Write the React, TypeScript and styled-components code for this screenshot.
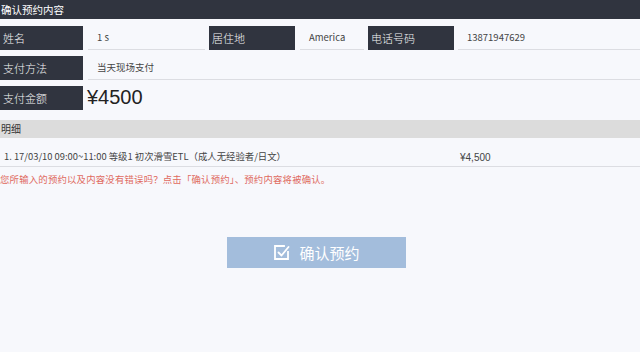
import React, { FC } from 'react';
import styled, { createGlobalStyle } from 'styled-components';

const GlobalStyle = createGlobalStyle`
  html, body {
    margin: 0;
    padding: 0;
    background: #f7f8fc;
  }
  body {
    font-family: "Noto Sans CJK SC", "Noto Sans", sans-serif;
    color: #333;
  }
`;

const Page = styled.div`
  width: 640px;
  height: 352px;
  overflow: hidden;
  background: #f7f8fc;
`;

const TitleBar = styled.div`
  height: 19px;
  background: #30343f;
  color: #fff;
  font-size: 10.5px;
  line-height: 19px;
  padding-left: 1px;
`;

const Form = styled.div`
  display: flex;
  flex-direction: column;
  gap: 6px;
  padding-top: 7px;
`;

const Row = styled.div`
  display: flex;
  height: 24px;
`;

const Label = styled.div<{ $w: number; $gap?: number }>`
  width: ${(p) => p.$w}px;
  margin-right: ${(p) => p.$gap ?? 5}px;
  flex-shrink: 0;
  background: #30343f;
  color: #f4f4f6;
  font-size: 11px;
  font-weight: 300;
  line-height: 24px;
  padding-left: 3px;
  box-sizing: border-box;
`;

const Value = styled.div<{ $w?: number; $big?: boolean; $line?: boolean }>`
  ${(p) => (p.$w ? `width: ${p.$w}px; flex-shrink: 0;` : 'flex: 1;')}
  margin-right: 4px;
  font-size: ${(p) => (p.$big ? '20px' : '9.5px')};
  line-height: 23px;
  color: ${(p) => (p.$big ? '#222' : '#444')};
  padding-left: ${(p) => (p.$big ? '0' : '9px')};
  border-bottom: ${(p) => (p.$line === false ? 'none' : '1px solid #dcdde2')};
  box-sizing: border-box;
  font-family: ${(p) => (p.$big ? '"Liberation Sans", "Noto Sans CJK SC", sans-serif' : 'inherit')};
  &:last-child {
    margin-right: 0;
  }
`;

const SectionHead = styled.div`
  margin-top: 10px;
  height: 18px;
  background: #dcdcdc;
  font-size: 10px;
  line-height: 18px;
  padding-left: 1px;
  color: #333;
`;

const DetailRow = styled.div`
  display: flex;
  height: 29px;
  align-items: flex-end;
  padding-bottom: 3px;
  box-sizing: border-box;
  border-bottom: 1px solid #dcdde2;
  font-size: 9.4px;
  color: #444;
`;

const DetailText = styled.div`
  width: 460px;
  padding-left: 4px;
  box-sizing: border-box;
`;

const Price = styled.div`
  font-size: 10px;
  font-family: "Liberation Sans", sans-serif;
`;

const Notice = styled.div`
  font-size: 9.4px;
  color: #e06a5f;
  padding-top: 6px;
  line-height: 12px;
  letter-spacing: 0.2px;
`;

const ButtonWrap = styled.div`
  display: flex;
  justify-content: center;
  padding-top: 52px;
  padding-right: 7px;
`;

const ConfirmButton = styled.button`
  width: 179px;
  height: 31px;
  border: none;
  background: #a3bddc;
  color: #fff;
  font-family: "Noto Sans CJK SC", sans-serif;
  font-size: 15px;
  display: flex;
  align-items: center;
  justify-content: center;
  gap: 9px;
  padding: 0;
  cursor: pointer;
`;

const CheckIcon: FC = () => (
  <svg width="17" height="17" viewBox="0 0 17 17" fill="none" stroke="#fff" strokeWidth="1.8">
    <path d="M11 2H2v13h13V8" strokeLinecap="square" />
    <path d="M5.5 8.5l3 3L15.5 3" strokeLinecap="round" strokeLinejoin="round" />
  </svg>
);

const App: FC = () => (
  <Page>
    <GlobalStyle />
    <TitleBar>确认预约内容</TitleBar>
    <Form>
      <Row>
        <Label $w={83}>姓名</Label>
        <Value $w={117}>1 s</Value>
        <Label $w={86}>居住地</Label>
        <Value $w={64}>America</Value>
        <Label $w={86} $gap={4}>电话号码</Label>
        <Value>13871947629</Value>
      </Row>
      <Row>
        <Label $w={83}>支付方法</Label>
        <Value>当天现场支付</Value>
      </Row>
      <Row>
        <Label $w={83} $gap={4}>支付金额</Label>
        <Value $big $line={false}>¥4500</Value>
      </Row>
    </Form>
    <SectionHead>明细</SectionHead>
    <DetailRow>
      <DetailText>1. 17/03/10 09:00~11:00 等级1 初次滑雪ETL（成人无经验者/日文）</DetailText>
      <Price>¥4,500</Price>
    </DetailRow>
    <Notice>您所输入的预约以及内容没有错误吗？点击「确认预约」、预约内容将被确认。</Notice>
    <ButtonWrap>
      <ConfirmButton>
        <CheckIcon />
        确认预约
      </ConfirmButton>
    </ButtonWrap>
  </Page>
);

export default App;
